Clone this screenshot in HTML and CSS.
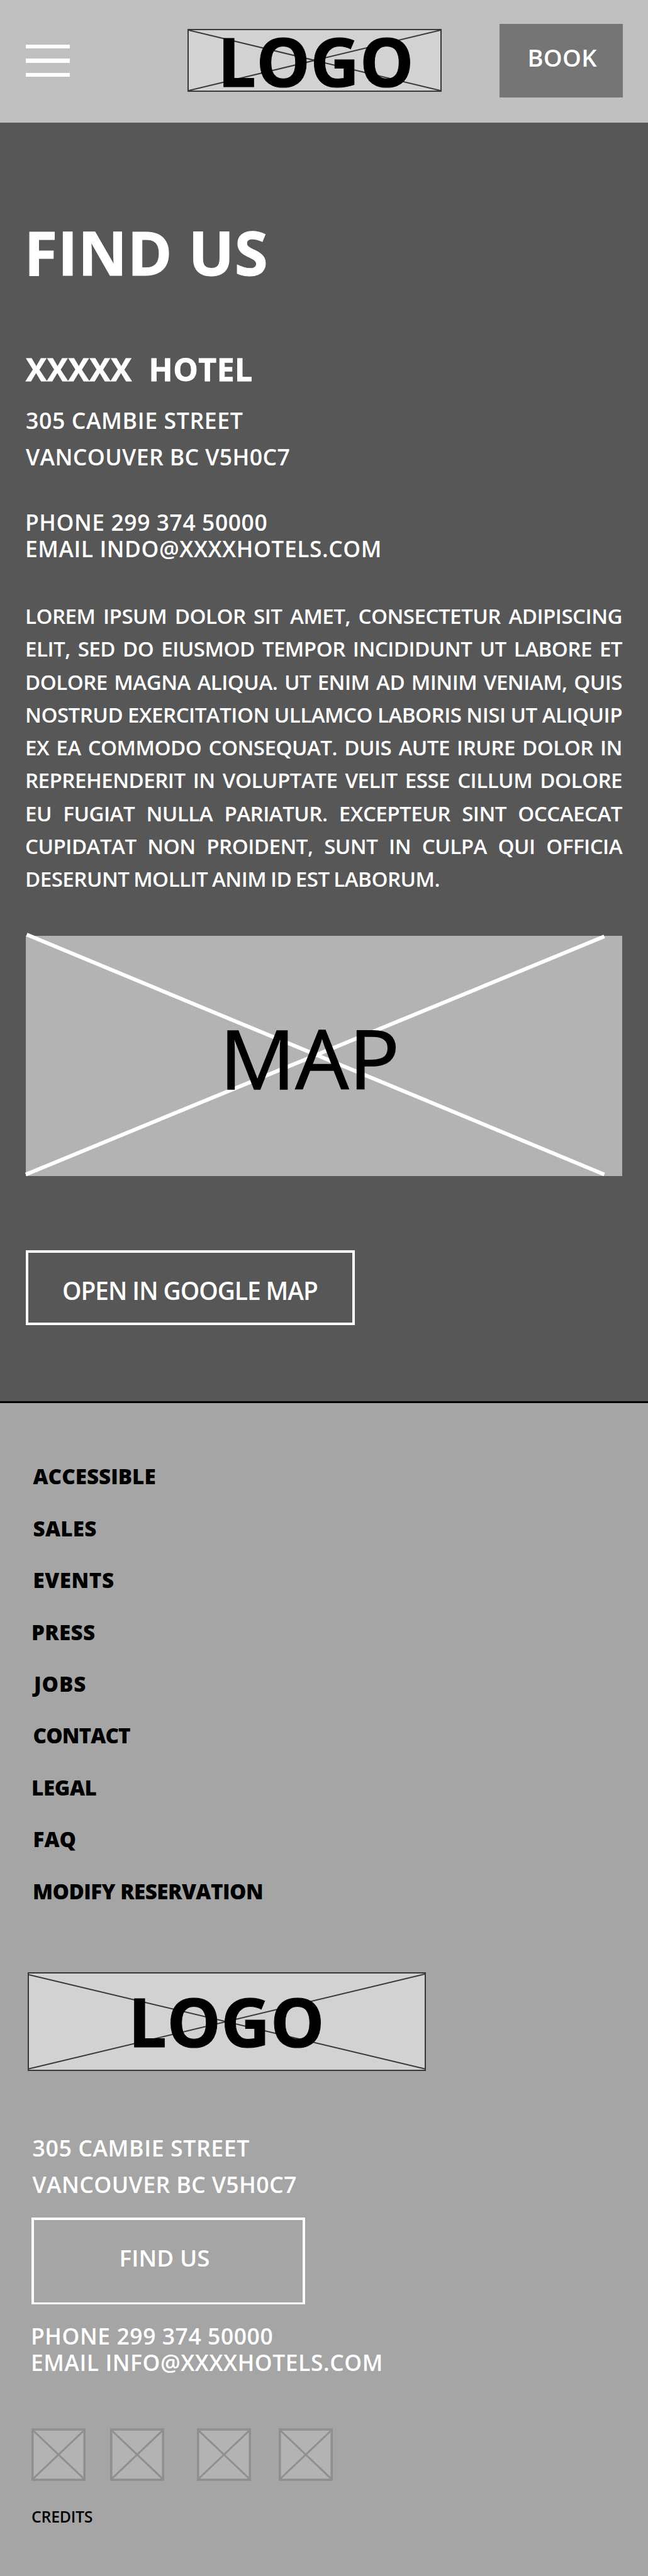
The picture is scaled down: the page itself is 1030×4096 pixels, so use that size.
FILE: index.html
```html
<!DOCTYPE html>
<html lang="en">
<head>
<meta charset="utf-8">
<title>Find us</title>
<link rel="stylesheet" href="styles.css">
</head>
<body>
<header class="topbar">
  <div class="burger"><span></span><span></span><span></span></div>
  <div class="logo logo-top">
    <svg class="cross" viewBox="0 0 400 96" preserveAspectRatio="none"><path d="M0 0L400 96M0 96L400 0"/></svg>
    <span class="logo-text">LOGO</span>
  </div>
  <a class="book">BOOK</a>
</header>

<main class="find">
  <h1>FIND US</h1>
  <h2>XXXXX  HOTEL</h2>
  <address class="address">
    <div class="street">305 CAMBIE STREET</div>
    <div class="city">VANCOUVER BC V5H0C7</div>
  </address>
  <div class="contact">
    <div class="phone">PHONE 299 374 50000</div>
    <div class="email">EMAIL INDO@XXXXHOTELS.COM</div>
  </div>
  <p class="intro">LOREM IPSUM DOLOR SIT AMET, CONSECTETUR ADIPISCING<br>
    ELIT, SED DO EIUSMOD TEMPOR INCIDIDUNT UT LABORE ET<br>
    DOLORE MAGNA ALIQUA. UT ENIM AD MINIM VENIAM, QUIS<br>
    NOSTRUD EXERCITATION ULLAMCO LABORIS NISI UT ALIQUIP<br>
    EX EA COMMODO CONSEQUAT. DUIS AUTE IRURE DOLOR IN<br>
    REPREHENDERIT IN VOLUPTATE VELIT ESSE CILLUM DOLORE<br>
    EU FUGIAT NULLA PARIATUR. EXCEPTEUR SINT OCCAECAT<br>
    CUPIDATAT NON PROIDENT, SUNT IN CULPA QUI OFFICIA</p>
  <p class="intro intro-end">DESERUNT MOLLIT ANIM ID EST LABORUM.</p>
  <div class="map">
    <svg class="map-cross" viewBox="0 0 948.5 382.5"><path d="M1.5 -2L920 379.5M0 379.5L920 1"/></svg>
    <span class="map-text">MAP</span>
  </div>
  <a class="outline open-map">OPEN IN GOOGLE MAP</a>
</main>

<footer class="footer">
  <nav class="links">
    <a>ACCESSIBLE</a>
    <a>SALES</a>
    <a>EVENTS</a>
    <a>PRESS</a>
    <a>JOBS</a>
    <a>CONTACT</a>
    <a>LEGAL</a>
    <a>FAQ</a>
    <a>MODIFY RESERVATION</a>
  </nav>
  <div class="logo logo-foot">
    <svg class="cross" viewBox="0 0 629 153" preserveAspectRatio="none"><path d="M0 2L629 152M0 152L629 1"/></svg>
    <span class="logo-text">LOGO</span>
  </div>
  <address class="address address-foot">
    <div class="street">305 CAMBIE STREET</div>
    <div class="city">VANCOUVER BC V5H0C7</div>
  </address>
  <a class="outline find-link">FIND US</a>
  <div class="contact contact-foot">
    <div class="phone">PHONE 299 374 50000</div>
    <div class="email">EMAIL INFO@XXXXHOTELS.COM</div>
  </div>
  <div class="social">
    <svg viewBox="0 0 86 84"><rect x="1.75" y="2" width="82.5" height="80"/><path d="M3 4L83 80M3 80L83 4"/></svg>
    <svg viewBox="0 0 86 84"><rect x="1.75" y="2" width="82.5" height="80"/><path d="M3 4L83 80M3 80L83 4"/></svg>
    <svg viewBox="0 0 86 84"><rect x="1.75" y="2" width="82.5" height="80"/><path d="M3 4L83 80M3 80L83 4"/></svg>
    <svg viewBox="0 0 86 84"><rect x="1.75" y="2" width="82.5" height="80"/><path d="M3 4L83 80M3 80L83 4"/></svg>
  </div>
  <div class="credits">CREDITS</div>
</footer>
</body>
</html>
```
FILE: styles.css
```css
* { box-sizing: border-box; }

body {
  margin: 0;
  font-family: "Open Sans", "Noto Sans", sans-serif;
  font-weight: 600;
  color: #fff;
  background: #a5a5a5;
  white-space: nowrap;
}

h1, h2, p, address { margin: 0; font-style: normal; }

/* Top bar */
.topbar {
  display: flex;
  align-items: flex-start;
  height: 195px;
  padding-left: 41px;
  background: #bfbfbf;
}

.burger {
  display: flex;
  flex-direction: column;
  gap: 16px;
  width: 70px;
  margin-top: 71px;
}

.burger span { height: 6.3px; background: #fff; }

.logo {
  position: relative;
  border: 2px solid #383838;
  background: #d2d2d2;
  color: #000;
  font-size: 108px;
  font-weight: 700;
  letter-spacing: 0.15px;
  -webkit-text-stroke: 1px #000;
}

.logo-top {
  width: 404px;
  height: 100px;
  margin: 46px 0 0 187px;
  padding-left: 46px;
  line-height: 97px;
}

.cross {
  position: absolute;
  inset: 0;
  width: 100%;
  height: 100%;
  fill: none;
  stroke: #383838;
  stroke-width: 2;
}

.logo-text { position: relative; display: block; height: 0; }

.book {
  width: 196px;
  height: 117px;
  margin: 37.5px 0 0 91.5px;
  padding-left: 45px;
  background: #757575;
  font-size: 38.1px;
  line-height: 107px;
  letter-spacing: 0.25px;
}

/* Main section */
.find {
  height: 2035.5px;
  padding: 156px 41px 0;
  border-bottom: 3px solid #000;
  background: #575757;
}

h1 {
  margin-left: -2.5px;
  font-size: 96.1px;
  font-weight: 700;
  line-height: 100px;
  letter-spacing: 0.47px;
  -webkit-text-stroke: 1px #fff;
}

h2 {
  margin-top: 110.7px;
  font-size: 49.8px;
  font-weight: 700;
  line-height: 50px;
  letter-spacing: 0.52px;
  white-space: pre;
  -webkit-text-stroke: 0.8px #fff;
}

.address {
  margin-top: 27.6px;
  font-size: 35.7px;
  line-height: 58.1px;
}

.street { letter-spacing: 0.57px; }
.city { letter-spacing: 0.35px; }

.contact {
  margin: 54.9px 0 0 -1px;
  font-size: 35.4px;
  line-height: 41.8px;
}

.phone { letter-spacing: 0.6px; }
.email { letter-spacing: 0.57px; }

.intro {
  margin: 60.2px 0 0 -1px;
  font-size: 33.1px;
  line-height: 52.23px;
  letter-spacing: -0.52px;
  word-spacing: -1.4px;
  text-align: justify;
  text-align-last: justify;
}

.intro-end { margin-top: 0; text-align-last: left; }

.map {
  position: relative;
  height: 382.5px;
  margin-top: 63.6px;
  padding-left: 308px;
  background: #b3b3b3;
}

.map-cross {
  position: absolute;
  inset: 0;
  width: 100%;
  height: 100%;
  overflow: visible;
  fill: none;
  stroke: #fff;
  stroke-width: 6;
}

.map-text {
  position: relative;
  display: block;
  height: 382px;
  color: #000;
  font-size: 130.2px;
  font-weight: 400;
  line-height: 387.4px;
  transform: scaleX(1.03);
  transform-origin: left;
  -webkit-text-stroke: 1.5px #000;
}

.outline {
  display: block;
  border: 4px solid #fff;
}

.open-map {
  width: 523px;
  height: 119px;
  margin-top: 117.8px;
  padding-left: 54px;
  font-size: 38.8px;
  line-height: 120px;
  letter-spacing: -1.03px;
}

/* Footer */
.footer {
  height: 1865.5px;
  padding: 76.6px 0 0 50px;
  background: #a5a5a5;
}

.links {
  display: flex;
  flex-direction: column;
  color: #000;
  font-size: 33.2px;
  font-weight: 800;
  line-height: 82.47px;
}

.links a { padding-left: 2.5px; }
.links a:nth-child(2) { letter-spacing: 0.25px; }
.links a:nth-child(3) { letter-spacing: 0.54px; }
.links a:nth-child(4) { padding-left: 0; letter-spacing: 0.3px; }
.links a:nth-child(5) { padding-left: 4px; letter-spacing: 0.9px; }
.links a:nth-child(6) { letter-spacing: -0.88px; }
.links a:nth-child(7) { padding-left: 0; letter-spacing: -0.4px; }
.links a:nth-child(9) { padding-left: 2px; letter-spacing: -0.55px; }

.logo-foot {
  width: 633px;
  height: 156.5px;
  margin: 86.9px 0 0 -6.5px;
  padding-left: 158.5px;
  line-height: 151.4px;
}

.address-foot { margin: 93.4px 0 0 1.5px; }

.find-link {
  width: 435px;
  height: 138.5px;
  margin-top: 23.3px;
  padding-left: 135.5px;
  border-bottom-width: 3px;
  font-size: 36.7px;
  line-height: 120.6px;
  letter-spacing: 0.1px;
}

.contact-foot { margin-top: 30px; }

.social {
  display: grid;
  grid-template-columns: 125.5px 138px 129.5px 86px;
  margin: 83.2px 0 0 -0.5px;
}

.social svg {
  width: 86px;
  height: 84px;
  fill: #b3b3b3;
  stroke: #8f8f8f;
  stroke-width: 3;
}

.social rect { stroke-width: 3.6; }

.credits {
  margin-top: 41.5px;
  color: #000;
  font-size: 24.9px;
  line-height: 30px;
  letter-spacing: -0.27px;
}
```
